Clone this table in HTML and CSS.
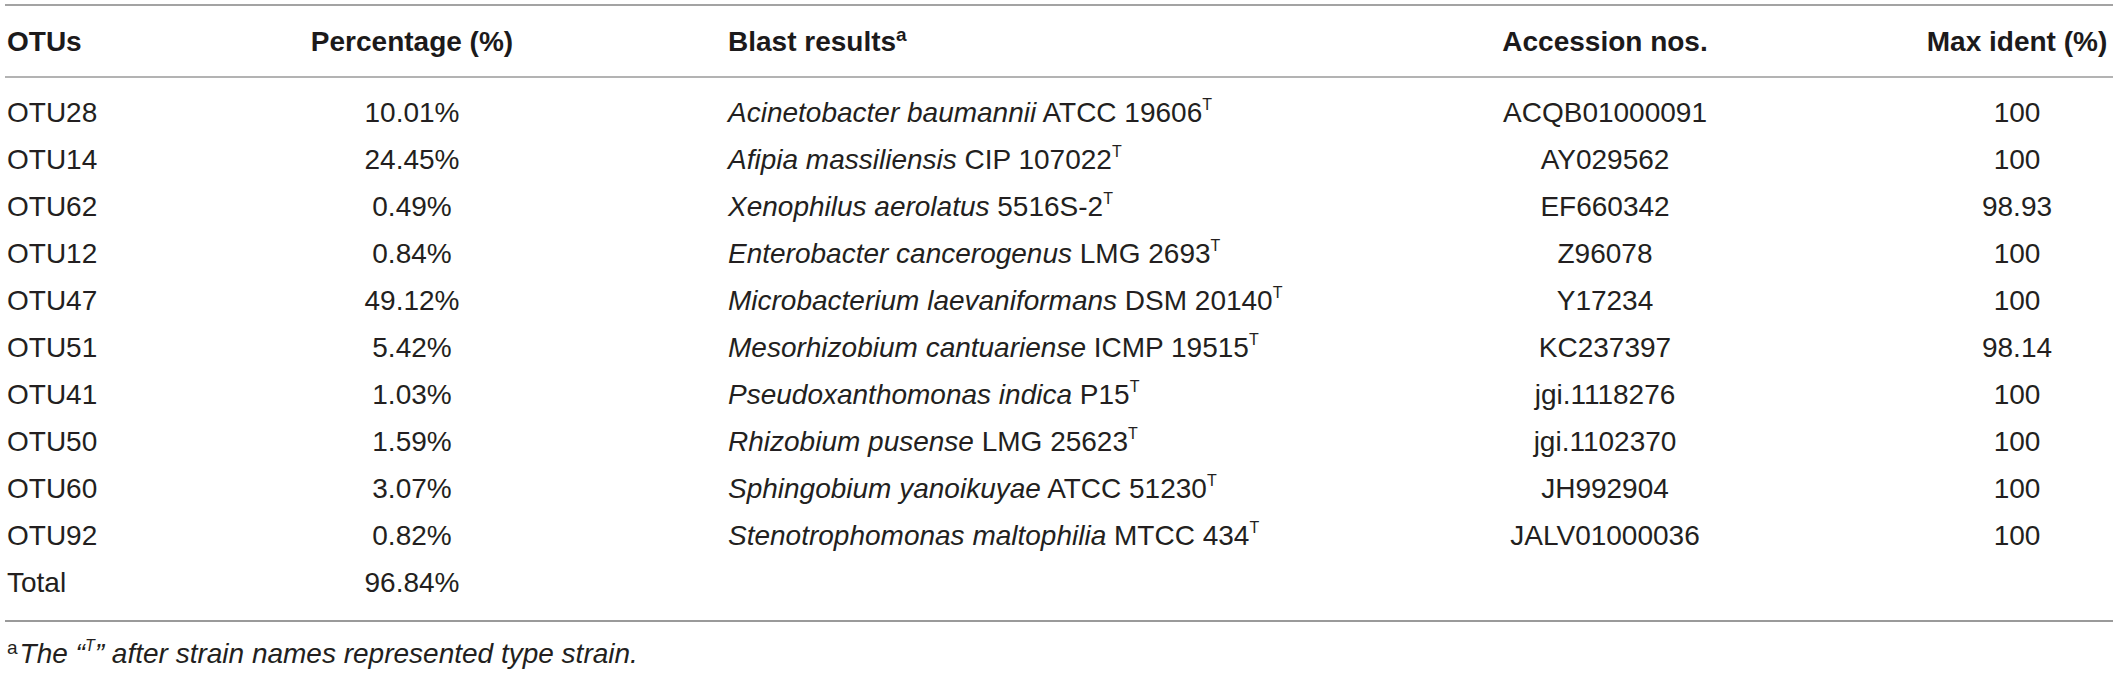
FILE: index.html
```html
<!DOCTYPE html>
<html lang="en">
<head>
<meta charset="utf-8">
<title>OTU blast results</title>
<link rel="stylesheet" href="styles.css">
</head>
<body>
<div class="wrap">
  <table class="otu-table">
    <colgroup>
      <col class="c-otu">
      <col class="c-pct">
      <col class="c-blast">
      <col class="c-acc">
      <col class="c-max">
    </colgroup>
    <thead>
      <tr>
        <th class="t-left first">OTUs</th>
        <th class="t-center">Percentage (%)</th>
        <th class="t-left blast">Blast results<sup class="hsup">a</sup></th>
        <th class="t-center">Accession nos.</th>
        <th class="t-center">Max ident (%)</th>
      </tr>
    </thead>
    <tbody>
      <tr class="row-first">
        <td class="t-left first">OTU28</td><td class="t-center">10.01%</td>
        <td class="t-left blast"><i>Acinetobacter baumannii</i> ATCC 19606<sup class="tsup">T</sup></td>
        <td class="t-center">ACQB01000091</td><td class="t-center">100</td>
      </tr>
      <tr>
        <td class="t-left first">OTU14</td><td class="t-center">24.45%</td>
        <td class="t-left blast"><i>Afipia massiliensis</i> CIP 107022<sup class="tsup">T</sup></td>
        <td class="t-center">AY029562</td><td class="t-center">100</td>
      </tr>
      <tr>
        <td class="t-left first">OTU62</td><td class="t-center">0.49%</td>
        <td class="t-left blast"><i>Xenophilus aerolatus</i> 5516S-2<sup class="tsup">T</sup></td>
        <td class="t-center">EF660342</td><td class="t-center">98.93</td>
      </tr>
      <tr>
        <td class="t-left first">OTU12</td><td class="t-center">0.84%</td>
        <td class="t-left blast"><i>Enterobacter cancerogenus</i> LMG 2693<sup class="tsup">T</sup></td>
        <td class="t-center">Z96078</td><td class="t-center">100</td>
      </tr>
      <tr>
        <td class="t-left first">OTU47</td><td class="t-center">49.12%</td>
        <td class="t-left blast"><i>Microbacterium laevaniformans</i> DSM 20140<sup class="tsup">T</sup></td>
        <td class="t-center">Y17234</td><td class="t-center">100</td>
      </tr>
      <tr>
        <td class="t-left first">OTU51</td><td class="t-center">5.42%</td>
        <td class="t-left blast"><i>Mesorhizobium cantuariense</i> ICMP 19515<sup class="tsup">T</sup></td>
        <td class="t-center">KC237397</td><td class="t-center">98.14</td>
      </tr>
      <tr>
        <td class="t-left first">OTU41</td><td class="t-center">1.03%</td>
        <td class="t-left blast"><i>Pseudoxanthomonas indica</i> P15<sup class="tsup">T</sup></td>
        <td class="t-center">jgi.1118276</td><td class="t-center">100</td>
      </tr>
      <tr>
        <td class="t-left first">OTU50</td><td class="t-center">1.59%</td>
        <td class="t-left blast"><i>Rhizobium pusense</i> LMG 25623<sup class="tsup">T</sup></td>
        <td class="t-center">jgi.1102370</td><td class="t-center">100</td>
      </tr>
      <tr>
        <td class="t-left first">OTU60</td><td class="t-center">3.07%</td>
        <td class="t-left blast"><i>Sphingobium yanoikuyae</i> ATCC 51230<sup class="tsup">T</sup></td>
        <td class="t-center">JH992904</td><td class="t-center">100</td>
      </tr>
      <tr>
        <td class="t-left first">OTU92</td><td class="t-center">0.82%</td>
        <td class="t-left blast"><i>Stenotrophomonas maltophilia</i> MTCC 434<sup class="tsup">T</sup></td>
        <td class="t-center">JALV01000036</td><td class="t-center">100</td>
      </tr>
      <tr class="row-last">
        <td class="t-left first">Total</td><td class="t-center">96.84%</td>
        <td class="t-left blast"></td>
        <td class="t-center"></td><td class="t-center"></td>
      </tr>
    </tbody>
  </table>
  <p class="footnote"><sup class="fsup">a</sup><i>The “<sup class="ftsup">T</sup>” after strain names represented type strain.</i></p>
</div>
</body>
</html>
```
FILE: styles.css
```css
html, body {
  margin: 0;
  padding: 0;
  background: #ffffff;
}

body {
  font-family: "Liberation Sans", Arial, Helvetica, sans-serif;
  color: #231f20;
}

.wrap {
  padding: 4px 0 0 5px;
  width: 2108px;
}

.otu-table {
  width: 2108px;
  table-layout: fixed;
  border-collapse: collapse;
  font-size: 28px;
  line-height: 32px;
}

.c-otu { width: 195px; }
.c-pct { width: 424px; }
.c-blast { width: 665px; }
.c-acc { width: 632px; }
.c-max { width: 192px; }

.otu-table thead tr {
  border-top: 2px solid #a3a3a3;
  border-bottom: 2px solid #b3b3b3;
}

.otu-table th {
  font-weight: bold;
  color: #1c1a1b;
  padding: 20px 0 18px 0;
  white-space: nowrap;
}

.otu-table td {
  font-weight: normal;
  padding: 7px 0 8px 0;
  white-space: nowrap;
}

.otu-table tbody .row-first td {
  padding-top: 19px;
}

.otu-table tbody .row-last td {
  padding-bottom: 21px;
}

.otu-table tbody .row-last {
  border-bottom: 2px solid #9a9a9a;
}

.t-left { text-align: left; }
.t-center { text-align: center; }

.first { padding-left: 2px !important; }
.blast { padding-left: 104px !important; }

.hsup {
  font-size: 19px;
  line-height: 0;
  vertical-align: 10px;
}

.tsup {
  font-size: 16px;
  line-height: 0;
  vertical-align: 12px;
  font-weight: normal;
}

.footnote {
  margin: 16px 0 0 0;
  font-size: 28px;
  line-height: 32px;
  padding-left: 2px;
}

.fsup {
  font-size: 19px;
  line-height: 0;
  vertical-align: 9px;
  margin-right: 2px;
}

.ftsup {
  font-size: 16px;
  line-height: 0;
  vertical-align: 12px;
}
```
